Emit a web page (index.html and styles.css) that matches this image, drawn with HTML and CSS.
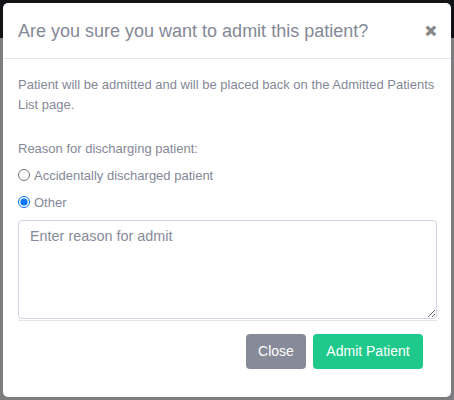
FILE: index.html
```html
<!DOCTYPE html>
<html>
<head>
<meta charset="utf-8">
<link rel="stylesheet" href="styles.css">
</head>
<body>
<div class="modal">
  <div class="modal-header">
    <h5 class="modal-title">Are you sure you want to admit this patient?</h5>
    <span class="btn-close">&#x2715;</span>
  </div>
  <div class="modal-body">
    <p class="intro">Patient will be admitted and will be placed back on the Admitted Patients List page.</p>
    <div class="label">Reason for discharging patient:</div>
    <label class="radio-row"><input type="radio" name="reason"> Accidentally discharged patient</label>
    <label class="radio-row"><input type="radio" name="reason" checked> Other</label>
    <div class="textarea-wrap">
      <textarea class="reason" placeholder="Enter reason for admit"></textarea>
    </div>
  </div>
  <div class="modal-footer">
    <button class="btn btn-close-gray">Close</button>
    <button class="btn btn-admit">Admit Patient</button>
  </div>
</div>
</body>
</html>
```

FILE: styles.css
```css
html, body {
  margin: 0;
  padding: 0;
}
body {
  width: 454px;
  height: 400px;
  overflow: hidden;
  background: linear-gradient(#121316 0 38px, #7d7d7f 38px);
  font-family: "Liberation Sans", Arial, sans-serif;
  padding: 3px;
  box-sizing: border-box;
}
.modal {
  width: 448px;
  height: 394px;
  background: #fff;
  border-radius: 5px;
  display: flex;
  flex-direction: column;
}
.modal-header {
  height: 56px;
  box-sizing: border-box;
  border-bottom: 1px solid #e6e7ee;
  display: flex;
  align-items: center;
  justify-content: space-between;
  padding: 1px 14px 0 15px;
}
.modal-title {
  margin: 0;
  font-size: 18px;
  font-weight: 400;
  color: #858897;
}
.btn-close {
  font-size: 14px;
  font-weight: 700;
  color: #8a8a8a;
  -webkit-text-stroke: 1.2px #8a8a8a;
}
.modal-body {
  padding: 16px 14px 0 15px;
  font-size: 13px;
  line-height: 19.5px;
  color: #858897;
}
.intro {
  margin: 0 0 25px 0;
}
.label {
  margin-bottom: 7px;
}
.radio-row {
  display: flex;
  align-items: center;
  height: 19.5px;
  margin-bottom: 7.5px;
}
.radio-row input {
  margin: 0 4px 0 0;
  width: 12px;
  height: 12px;
}
.textarea-wrap {
  border-bottom: 1px solid #e3e3ee;
  padding-bottom: 1px;
}
.reason {
  display: block;
  width: 100%;
  height: 99px;
  box-sizing: border-box;
  border: 1px solid #d3d3e4;
  border-radius: 4px;
  padding: 7px 11px;
  font-family: "Liberation Sans", Arial, sans-serif;
  font-size: 14.4px;
  color: #858897;
  resize: vertical;
}
.reason::placeholder {
  color: #878a99;
}
.modal-footer {
  display: flex;
  justify-content: flex-end;
  gap: 7px;
  padding: 13px 28px 0 0;
}
.btn {
  height: 35px;
  border: none;
  border-radius: 4px;
  color: #fff;
  font-family: "Liberation Sans", Arial, sans-serif;
  font-size: 14px;
  padding: 0 12px;
}
.btn-close-gray {
  background: #878a99;
  width: 60px;
}
.btn-admit {
  background: #1fc98b;
  width: 110px;
}
```
